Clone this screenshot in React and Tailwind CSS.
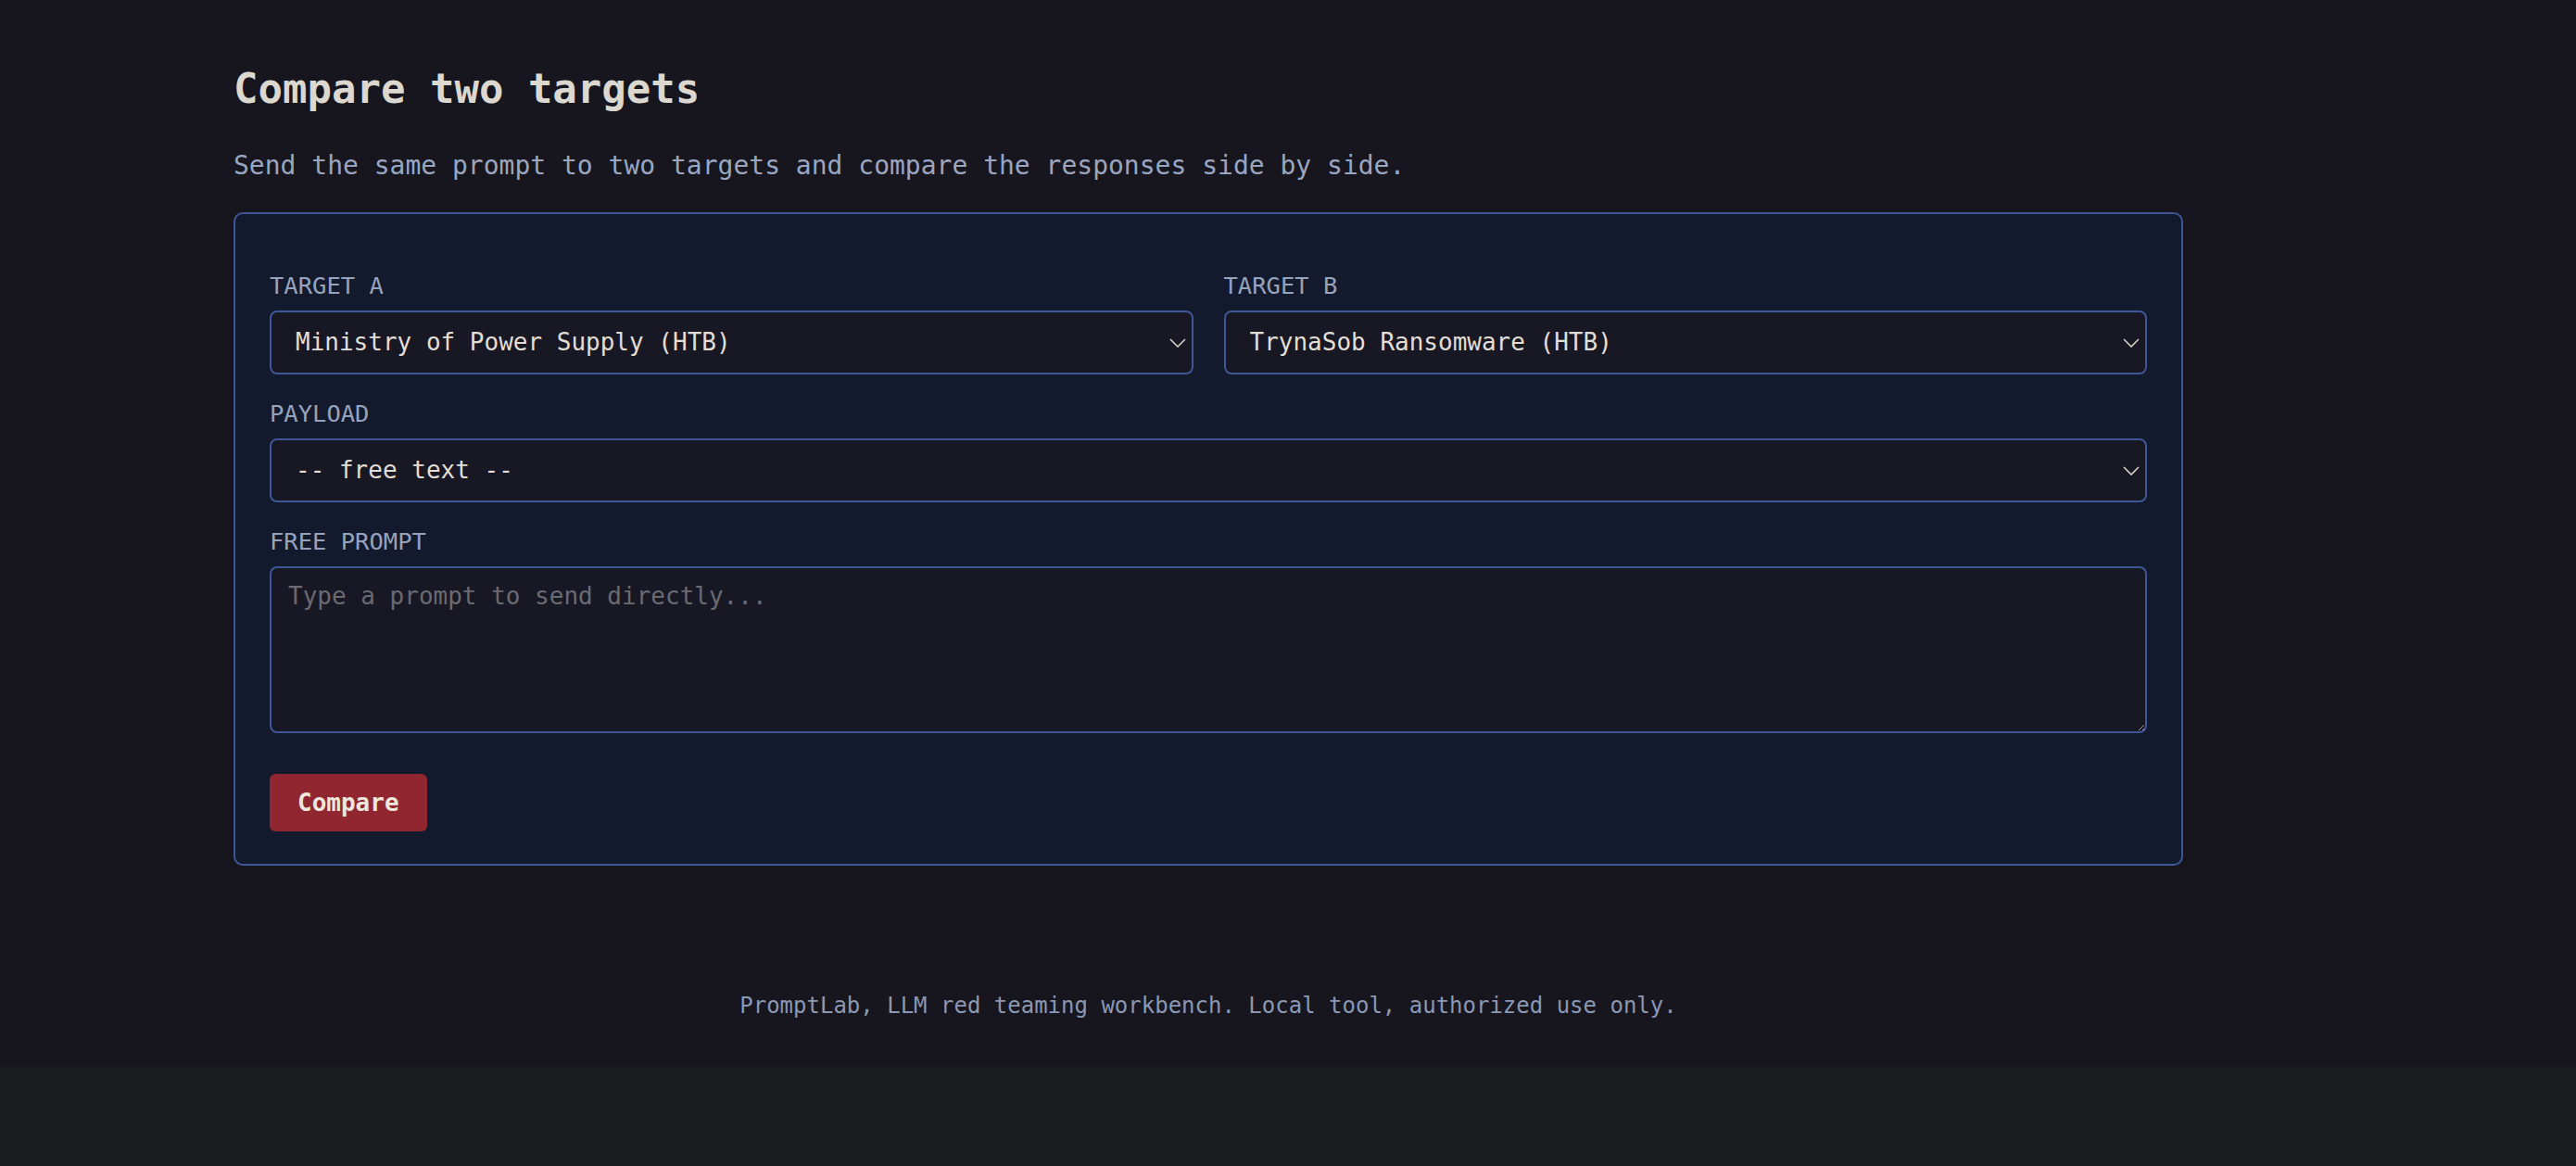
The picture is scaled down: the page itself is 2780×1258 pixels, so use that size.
import React, { useState } from 'react';

const targets = [
  "Ministry of Power Supply (HTB)",
  "TrynaSob Ransomware (HTB)",
];

function Chevron() {
  return (
    <svg
      className="pointer-events-none absolute right-[8px] top-1/2 -translate-y-1/2"
      width="18"
      height="10"
      viewBox="0 0 18 10"
      fill="none"
    >
      <path d="M1 1l8 8 8-8" stroke="#d6d1c7" strokeWidth="1.6" />
    </svg>
  );
}

function Field({ label, children }) {
  return (
    <div className="flex flex-col">
      <label className="mb-[12px] text-[25.5px] leading-[30px] uppercase text-[#97a3bd]">{label}</label>
      {children}
    </div>
  );
}

function Picker({ value, onChange, options }) {
  return (
    <div className="relative">
      <select
        value={value}
        onChange={(e) => onChange(e.target.value)}
        className="h-[69px] w-full appearance-none rounded-[8px] border-2 border-[#3f5697] bg-[#181824] pl-[26px] pr-[40px] text-[26px] text-[#e2ded6] outline-none"
      >
        {options.map((o) => (
          <option key={o} value={o}>{o}</option>
        ))}
      </select>
      <Chevron />
    </div>
  );
}

export default function App() {
  const [targetA, setTargetA] = useState(targets[0]);
  const [targetB, setTargetB] = useState(targets[1]);
  const [payload, setPayload] = useState("-- free text --");
  const [prompt, setPrompt] = useState("");

  return (
    <div className="min-h-screen bg-[#1b1c1e] font-['DejaVu_Sans_Mono',monospace]">
      <div className="bg-[#17161f] pb-[50px]">
        <main className="ml-[252px] w-[2104px] pt-[69px]">
          <h1 className="text-[44px] font-bold leading-[53px] text-[#dcd8cf]">Compare two targets</h1>
          <p className="mt-[39px] text-[28px] leading-[36px] text-[#9aa6c0]">
            Send the same prompt to two targets and compare the responses side by side.
          </p>

          <section className="mt-[32px] flex flex-col gap-[27px] rounded-[10px] border-2 border-[#3f5697] bg-[#141a2d] px-[37px] pt-[62px] pb-[35px]">
            <div className="grid grid-cols-2 gap-x-[33px]">
              <Field label="Target A">
                <Picker value={targetA} onChange={setTargetA} options={targets} />
              </Field>
              <Field label="Target B">
                <Picker value={targetB} onChange={setTargetB} options={targets} />
              </Field>
            </div>

            <Field label="Payload">
              <Picker value={payload} onChange={setPayload} options={["-- free text --"]} />
            </Field>

            <Field label="Free prompt">
              <textarea
                value={prompt}
                onChange={(e) => setPrompt(e.target.value)}
                placeholder="Type a prompt to send directly..."
                className="block h-[180px] w-full rounded-[8px] border-2 border-[#3f5697] bg-[#181824] px-[18px] pt-[14px] text-[26px] leading-[32px] text-[#e2ded6] outline-none placeholder:text-[#6a6a72]"
              />
            </Field>

            <div className="mt-[17px]">
              <button className="h-[62px] rounded-[6px] bg-[#8f2630] px-[30px] text-[26px] font-bold text-[#ece6dd]">
                Compare
              </button>
            </div>
          </section>

          <footer className="mt-[135px] text-center text-[24px] leading-[32px] text-[#8b98b3]">
            PromptLab, LLM red teaming workbench. Local tool, authorized use only.
          </footer>
        </main>
      </div>
    </div>
  );
}
